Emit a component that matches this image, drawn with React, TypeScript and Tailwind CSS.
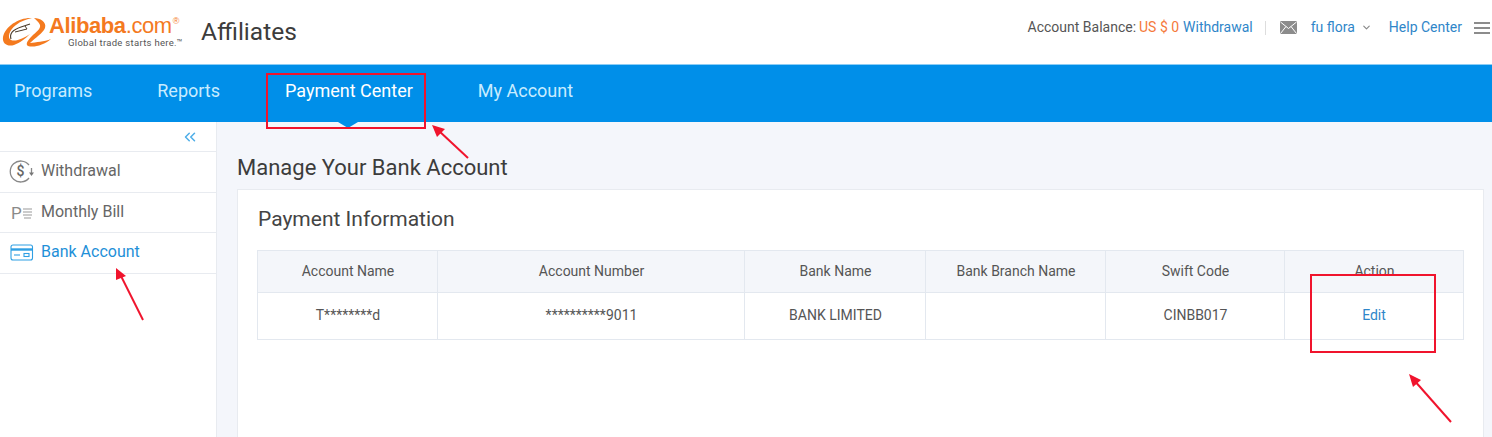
import { ChevronDown, ChevronsLeft } from 'lucide-react';

const columns = [
  { label: 'Account Name', width: 'w-[180px]' },
  { label: 'Account Number', width: 'w-[307px]' },
  { label: 'Bank Name', width: 'w-[181px]' },
  { label: 'Bank Branch Name', width: 'w-[180px]' },
  { label: 'Swift Code', width: 'w-[179px]' },
  { label: 'Action', width: 'flex-1' },
];

const row = ['T********d', '**********9011', 'BANK LIMITED', '', 'CINBB017'];

function LogoMark() {
  return (
    <svg width="52" height="36" viewBox="0 12 52 36" fill="none">
      <path
        d="M32 16C20 15 5 24 3 35C2 42 8 45 14 43C20 41 26 36 30 32C24 36 16 40 11 38C7 36 9 28 16 23C21 19 27 17 32 16Z"
        fill="#f47a1f"
      />
      <path d="M11 37C9 31 15 27 21 25L30 22" stroke="#4a3a2a" strokeWidth="1.1" />
      <path d="M15 30L27 27L25 24" stroke="#4a3a2a" strokeWidth="1" />
      <path
        d="M34 16C40 16 47 20 45 26C43 31 35 36 30 41C36 40 44 40 51 37C44 43 34 46 28 44C25 42 28 38 32 34C36 30 41 27 40 23C39 20 36 18 34 16Z"
        fill="#f47a1f"
      />
    </svg>
  );
}

function MailIcon() {
  return (
    <svg width="17" height="13" viewBox="0 0 17 13" fill="none">
      <rect width="17" height="13" rx="1" fill="#8c8c8c" />
      <path d="M0.5 1L8.5 7.5L16.5 1M0.5 12.5L6 5.5M16.5 12.5L11 5.5" stroke="#fff" strokeWidth="1" />
    </svg>
  );
}

function MenuIcon() {
  return (
    <svg width="16" height="12" viewBox="0 0 16 12" fill="#8c8c8c">
      <rect width="16" height="2" />
      <rect y="5" width="16" height="2" />
      <rect y="10" width="16" height="2" />
    </svg>
  );
}

function WithdrawalIcon() {
  return (
    <svg width="26" height="26" viewBox="0 0 26 26" fill="none" stroke="#888" strokeWidth="1.3">
      <path d="M20 7A10.5 10.5 0 1 0 20 20" />
      <text
        x="11.5"
        y="18"
        fontSize="14"
        fontWeight="500"
        fill="#666"
        stroke="none"
        textAnchor="middle"
        fontFamily="Roboto, sans-serif"
      >
        $
      </text>
      <path d="M22.5 10V15" />
      <path d="M20 14.5H25L22.5 18Z" fill="#777" stroke="none" />
    </svg>
  );
}

function BillIcon() {
  return (
    <svg width="24" height="20" viewBox="0 0 24 20" fill="none" stroke="#999" strokeWidth="1.1">
      <text x="1" y="17" fontSize="17" fill="#8a8a8a" stroke="none" fontFamily="Roboto, sans-serif">
        P
      </text>
      <path d="M13 7H22M13 10H22M13 13H22M14 16H21" />
    </svg>
  );
}

function BankIcon() {
  return (
    <svg width="24" height="17" viewBox="0 0 24 17" fill="none" stroke="#2f9fe3" strokeWidth="1.1">
      <rect x="1" y="1" width="21.5" height="15" rx="2" />
      <path d="M1 5.5H22.5" strokeWidth="2.4" />
      <path d="M4 11H10" />
      <rect x="14" y="9.5" width="5" height="3" />
    </svg>
  );
}

function SideItem({ icon, label, active }: { icon: React.ReactNode; label: string; active?: boolean }) {
  return (
    <div
      className={`flex h-[40.5px] items-center border-b border-[#e8ebf0] pb-[1px] ${
        active ? 'text-[#1f90d8]' : 'text-[#666]'
      }`}
    >
      <div className="flex w-[41px] justify-center pl-[2px]">{icon}</div>
      <span className="text-[16px]">{label}</span>
    </div>
  );
}

export default function App() {
  return (
    <div className="relative h-[437px] w-[1492px] overflow-hidden bg-white font-['Roboto',sans-serif]">
      <header className="flex h-[64px] items-center justify-between">
        <div className="flex items-center">
          <LogoMark />
          <div className="ml-[-3px] flex w-[134px] flex-col items-start">
            <div className="flex h-[20px] items-start font-['Liberation_Sans',sans-serif] text-[22px] leading-[20px] tracking-[-0.4px] text-[#f47a1f]">
              <span className="font-bold">Alibaba</span>
              <span>.com</span>
              <span className="ml-[1px] text-[9px] leading-[10px]">®</span>
            </div>
            <div className="mt-[1px] pl-[19px] text-[9.5px] leading-[11px] tracking-[0.3px] whitespace-nowrap text-[#555]">
              Global trade starts here.™
            </div>
          </div>
          <span className="ml-[18px] text-[24.5px] text-[#3c3c3c]">Affiliates</span>
        </div>
        <div className="mt-[-9px] flex items-center text-[14px]">
          <span className="text-[#555]">Account Balance:</span>
          <span className="ml-[3px] text-[#f5793b]">US $ 0</span>
          <span className="ml-[4px] text-[#2f86c9]">Withdrawal</span>
          <span className="mr-[14px] ml-[12px] h-[14px] w-px bg-[#ddd]" />
          <MailIcon />
          <span className="ml-[14px] text-[#2f86c9]">fu flora</span>
          <ChevronDown size={11} strokeWidth={2.5} className="ml-[6px] text-[#888]" />
          <span className="ml-[17px] text-[#2f86c9]">Help Center</span>
          <span className="mr-[2px] ml-[12px]">
            <MenuIcon />
          </span>
        </div>
      </header>

      <nav className="relative flex h-[58px] items-center gap-[65px] border-t border-[#8ccdf5] bg-[#008fe9] pb-[7px] pl-[14px] text-[18px] text-[#c8ecff]">
        <span>Programs</span>
        <span>Reports</span>
        <span className="relative text-white">Payment Center</span>
        <span>My Account</span>
        <span className="absolute top-full left-[338px] h-0 w-0 border-x-[10px] border-t-[6px] border-x-transparent border-t-[#008fe9]" />
      </nav>

      <div className="flex h-[315px]">
        <aside className="w-[217px] border-r border-[#e8ebf0] bg-white">
          <div className="flex h-[30px] items-center justify-end border-b border-[#e8ebf0] pr-[17px] text-[#4eaee8]">
            <ChevronsLeft size={18} strokeWidth={2} />
          </div>
          <SideItem icon={<WithdrawalIcon />} label="Withdrawal" />
          <SideItem icon={<BillIcon />} label="Monthly Bill" />
          <SideItem icon={<BankIcon />} label="Bank Account" active />
        </aside>

        <main className="flex-1 bg-[#f4f6fb] pt-[32px] pr-[8px] pl-[20px]">
          <h1 className="text-[22px] leading-[28px] text-[#3c3c3c]">Manage Your Bank Account</h1>
          <section className="mt-[7px] h-[300px] border border-[#e8ebf0] bg-white px-[19px] pt-[15px]">
            <h2 className="ml-[1px] text-[21px] leading-[28px] text-[#444]">Payment Information</h2>
            <div className="mt-[17px] border border-[#e3e8ef] text-[14px] text-[#555]">
              <div className="flex h-[42px] border-b border-[#e3e8ef] bg-[#f4f6fa]">
                {columns.map((col, i) => (
                  <div
                    key={col.label}
                    className={`flex items-center justify-center pl-[1px] ${col.width} ${
                      i < columns.length - 1 ? 'border-r border-[#e3e8ef]' : ''
                    }`}
                  >
                    {col.label}
                  </div>
                ))}
              </div>
              <div className="flex h-[46px]">
                {row.map((cell, i) => (
                  <div
                    key={columns[i].label}
                    className={`flex items-center justify-center border-r border-[#e3e8ef] pb-[2px] pl-[1px] ${columns[i].width}`}
                  >
                    {cell}
                  </div>
                ))}
                <div className="flex flex-1 items-center justify-center pb-[2px] text-[#2f86c9]">Edit</div>
              </div>
            </div>
          </section>
        </main>
      </div>

      <div className="absolute top-[73px] left-[266px] h-[56px] w-[160px] border-2 border-[#f0142d]" />
      <div className="absolute top-[274px] left-[1310px] h-[79px] w-[126px] border-2 border-[#f0142d]" />

      <svg className="pointer-events-none absolute inset-0" width="1492" height="437" fill="none">
        <path d="M468 158L438 130" stroke="#f0142d" strokeWidth="2" />
        <path d="M432 125L445 129L437 137Z" fill="#f0142d" />
        <path d="M1451 422L1413 379" stroke="#f0142d" strokeWidth="2" />
        <path d="M1409 374L1421 380L1413 387Z" fill="#f0142d" />
        <path d="M143 320L120 274" stroke="#f0142d" strokeWidth="2" />
        <path d="M116 268L126 276L116 280Z" fill="#f0142d" />
      </svg>
    </div>
  );
}
